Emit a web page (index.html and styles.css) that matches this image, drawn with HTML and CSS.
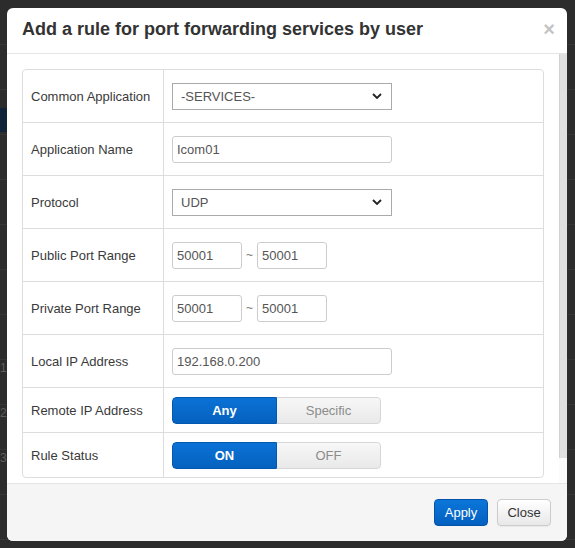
FILE: index.html
```html
<!DOCTYPE html>
<html>
<head>
<meta charset="utf-8">
<link rel="stylesheet" href="styles.css">
</head>
<body>
<div class="backdrop">
  <div class="bg-bar"></div>
  <div class="bg-num n1">1</div>
  <div class="bg-num n2">2</div>
  <div class="bg-num n3">3</div>
  <div class="modal">
    <div class="modal-header">
      <h3 class="title">Add a rule for port forwarding services by user</h3>
      <span class="close-x">&times;</span>
    </div>
    <div class="modal-body">
      <div class="body-content">
        <div class="form-table">
          <div class="row tall">
            <div class="lbl">Common Application</div>
            <div class="val">
              <div class="select wide"><span>-SERVICES-</span>
                <svg class="chev" viewBox="0 0 10 6" width="10" height="6"><path d="M1 1 L5 5 L9 1" fill="none" stroke="#222" stroke-width="1.8"/></svg>
              </div>
            </div>
          </div>
          <div class="row tall">
            <div class="lbl">Application Name</div>
            <div class="val"><div class="input wide">Icom01</div></div>
          </div>
          <div class="row tall">
            <div class="lbl">Protocol</div>
            <div class="val">
              <div class="select wide"><span>UDP</span>
                <svg class="chev" viewBox="0 0 10 6" width="10" height="6"><path d="M1 1 L5 5 L9 1" fill="none" stroke="#222" stroke-width="1.8"/></svg>
              </div>
            </div>
          </div>
          <div class="row tall">
            <div class="lbl">Public Port Range</div>
            <div class="val"><div class="range"><div class="input port">50001</div><span class="tilde">~</span><div class="input port">50001</div></div></div>
          </div>
          <div class="row tall">
            <div class="lbl">Private Port Range</div>
            <div class="val"><div class="range"><div class="input port">50001</div><span class="tilde">~</span><div class="input port">50001</div></div></div>
          </div>
          <div class="row tall">
            <div class="lbl">Local IP Address</div>
            <div class="val"><div class="input wide">192.168.0.200</div></div>
          </div>
          <div class="row short">
            <div class="lbl">Remote IP Address</div>
            <div class="val"><div class="toggle"><span class="on">Any</span><span class="off">Specific</span></div></div>
          </div>
          <div class="row short">
            <div class="lbl">Rule Status</div>
            <div class="val"><div class="toggle"><span class="on">ON</span><span class="off">OFF</span></div></div>
          </div>
        </div>
      </div>
      <div class="scrollbar"><div class="thumb"></div></div>
    </div>
    <div class="modal-footer">
      <span class="btn btn-primary">Apply</span>
      <span class="btn btn-default">Close</span>
    </div>
  </div>
</div>
</body>
</html>
```
FILE: styles.css
```css
html, body {
  margin: 0;
  padding: 0;
}
body {
  background: #2b2b2b;
  font-family: "Liberation Sans", Arial, sans-serif;
  font-size: 13px;
  color: #333;
}
.backdrop {
  position: relative;
  width: 575px;
  height: 548px;
  overflow: hidden;
  padding: 8px 0 0 7px;
  box-sizing: border-box;
  background: repeating-linear-gradient(to bottom, #2c2c2c 0, #2c2c2c 44px, #363636 44px, #363636 45px);
}
.bg-bar {
  position: absolute;
  left: 0;
  top: 108px;
  width: 7px;
  height: 24px;
  background: #0f2438;
}
.bg-num {
  position: absolute;
  left: 0;
  color: #5e5e5e;
  font-size: 12px;
}
.n1 { top: 361px; }
.n2 { top: 406px; }
.n3 { top: 451px; }
.modal {
  position: relative;
  width: 560px;
  height: 533px;
  background: #fff;
  border-radius: 6px;
  display: flex;
  flex-direction: column;
  overflow: hidden;
}
.modal-header {
  height: 46px;
  box-sizing: border-box;
  border-bottom: 1px solid #e5e5e5;
  display: flex;
  align-items: center;
  justify-content: space-between;
  padding: 0 15px;
  flex: none;
}
.title {
  margin: 0;
  font-size: 18px;
  font-weight: bold;
  color: #333;
  position: relative;
  top: -1px;
}
.close-x {
  color: #c4c4c4;
  font-size: 20px;
  font-weight: bold;
  line-height: 1;
  position: relative;
  top: -2px;
  right: -3px;
}
.modal-body {
  flex: 1;
  display: flex;
  min-height: 0;
}
.body-content {
  flex: 1;
  padding: 15px;
}
.scrollbar {
  width: 8px;
  flex: none;
  background: #fbfbfb;
  display: flex;
  flex-direction: column;
}
.thumb {
  height: 404px;
  background: #e0e0e0;
  border-left: 1px solid #d2d2d2;
  box-sizing: border-box;
}
.form-table {
  border: 1px solid #dddddd;
  border-radius: 4px;
  display: flex;
  flex-direction: column;
}
.row {
  display: grid;
  grid-template-columns: 141px 1fr;
  border-top: 1px solid #dddddd;
  box-sizing: border-box;
}
.row:first-child {
  border-top: none;
}
.tall { height: 53px; }
.row.tall:first-child { height: 52px; }
.short { height: 45px; }
.lbl {
  border-right: 1px solid #dddddd;
  display: flex;
  align-items: center;
  padding-left: 8px;
  white-space: nowrap;
  color: #3a3a3a;
}
.val {
  display: flex;
  align-items: center;
  padding-left: 8px;
}
.select, .input {
  box-sizing: border-box;
  height: 27px;
  display: flex;
  align-items: center;
  color: #555;
  font-size: 13px;
}
.select {
  border: 1px solid #aaaaaa;
  padding: 0 8px 0 8px;
  justify-content: space-between;
  background: #fff;
}
.input {
  border: 1px solid #cccccc;
  border-radius: 3px;
  padding: 0 4px;
}
.wide { width: 220px; }
.port { width: 70px; }
.range {
  display: flex;
  align-items: center;
}
.tilde {
  width: 15px;
  text-align: center;
  color: #777;
  font-size: 12px;
}
.chev { margin-right: 1px; }
.toggle {
  display: flex;
  width: 209px;
  height: 27px;
  border-radius: 4px;
  overflow: hidden;
  font-size: 13px;
}
.toggle span {
  flex: 1;
  display: flex;
  align-items: center;
  justify-content: center;
  box-sizing: border-box;
}
.toggle .on {
  background: linear-gradient(#0b72d6, #0561be);
  color: #fff;
  font-weight: bold;
  border: 1px solid #0558b0;
  border-radius: 4px 0 0 4px;
}
.toggle .off {
  background: linear-gradient(#f7f7f7, #e9e9e9);
  color: #8c8c8c;
  border: 1px solid #d6d6d6;
  border-left: none;
  border-radius: 0 4px 4px 0;
}
.modal-footer {
  flex: none;
  height: 58px;
  box-sizing: border-box;
  border-top: 1px solid #e5e5e5;
  background: #f5f5f5;
  display: flex;
  justify-content: flex-end;
  align-items: center;
  gap: 9px;
  padding: 0 16px 0 15px;
}
.btn {
  box-sizing: border-box;
  height: 27px;
  width: 54px;
  display: flex;
  align-items: center;
  justify-content: center;
  border-radius: 4px;
  font-size: 13px;
}
.btn-primary {
  background: linear-gradient(#0b76da, #0460c0);
  border: 1px solid #0553a8;
  color: #fff;
}
.btn-default {
  background: linear-gradient(#ffffff, #e8e8e8);
  border: 1px solid #cccccc;
  color: #333;
  box-shadow: 0 1px 1px rgba(0,0,0,0.05);
}
```
